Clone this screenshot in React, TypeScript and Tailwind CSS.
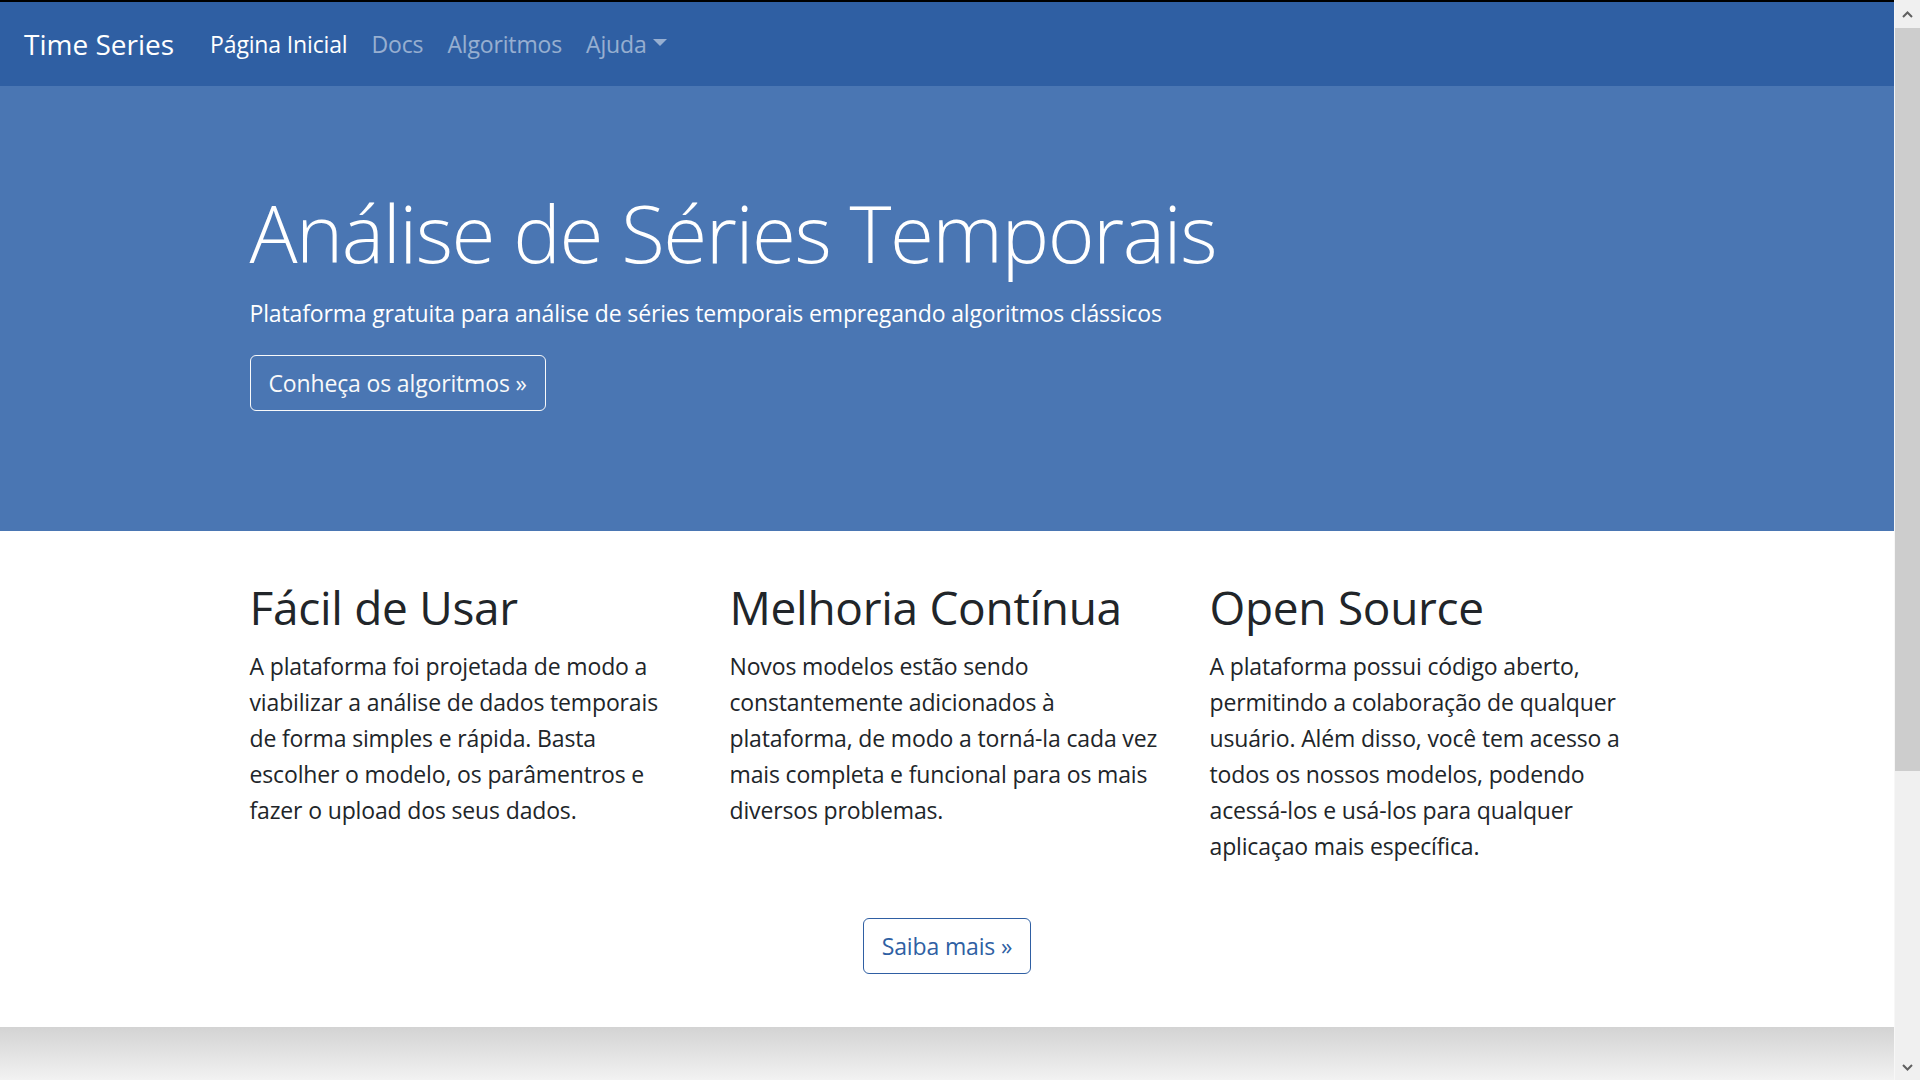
import React from "react";

const font = { fontFamily: '"Open Sans", "Noto Sans", sans-serif' };

function Col({ title, lines }: { title: string; lines: string[] }) {
  return (
    <div className="px-[22.5px]">
      <h2 className="text-[46px] leading-[57.6px] tracking-[-0.3px] font-normal text-[#212529] mb-[12px] whitespace-nowrap">{title}</h2>
      <p className="text-[23px] leading-[36px] tracking-[-0.15px] text-[#212529] mb-[24px]">
        {lines.map((l, i) => (
          <span key={i} className="block whitespace-nowrap">{l}</span>
        ))}
      </p>
    </div>
  );
}

export default function App() {
  return (
    <div className="flex h-screen w-full overflow-hidden bg-white" style={font}>
      <div className="flex-1 min-w-0 flex flex-col">
        <div className="h-[2px] bg-black shrink-0" />
        <nav className="h-[84px] shrink-0 bg-[#2f5fa3] flex items-center px-[24px]">
          <span className="text-[28px] text-white mr-[24px] leading-[45px]">Time Series</span>
          <ul className="flex items-center text-[23px] leading-[36px] tracking-[-0.15px]">
            <li className="px-[12px] text-white">Página Inicial</li>
            <li className="px-[12px] text-white/50">Docs</li>
            <li className="px-[12px] text-white/50">Algoritmos</li>
            <li className="px-[12px] text-white/50 flex items-center">
              Ajuda
              <span className="ml-[6px] mb-[4px] w-0 h-0 border-l-[7px] border-r-[7px] border-t-[7px] border-l-transparent border-r-transparent border-t-white/50" />
            </li>
          </ul>
        </nav>
        <section className="shrink-0 bg-[#4a76b3] pt-[96px] pb-[96px]">
          <div className="w-[1440px] mx-auto px-[22.5px]">
            <h1 className="text-[80px] leading-[100.8px] tracking-[-1.5px] font-light text-white mb-[12px] whitespace-nowrap">
              Análise de Séries Temporais
            </h1>
            <p className="text-[23px] leading-[36px] tracking-[-0.15px] text-white mb-[24px] whitespace-nowrap">
              Plataforma gratuita para análise de séries temporais empregando algoritmos clássicos
            </p>
            <p className="mb-[24px] h-[56px]">
              <button className="h-[56px] px-[18px] border border-[#f8f9fa] rounded-[6px] text-[23px] leading-[36px] tracking-[-0.15px] text-[#f8f9fa]">
                Conheça os algoritmos »
              </button>
            </p>
          </div>
        </section>
        <section className="shrink-0 pt-[48px]">
          <div className="w-[1440px] mx-auto grid grid-cols-3">
            <Col
              title="Fácil de Usar"
              lines={[
                "A plataforma foi projetada de modo a",
                "viabilizar a análise de dados temporais",
                "de forma simples e rápida. Basta",
                "escolher o modelo, os parâmentros e",
                "fazer o upload dos seus dados.",
              ]}
            />
            <Col
              title="Melhoria Contínua"
              lines={[
                "Novos modelos estão sendo",
                "constantemente adicionados à",
                "plataforma, de modo a torná-la cada vez",
                "mais completa e funcional para os mais",
                "diversos problemas.",
              ]}
            />
            <Col
              title="Open Source"
              lines={[
                "A plataforma possui código aberto,",
                "permitindo a colaboração de qualquer",
                "usuário. Além disso, você tem acesso a",
                "todos os nossos modelos, podendo",
                "acessá-los e usá-los para qualquer",
                "aplicaçao mais específica.",
              ]}
            />
          </div>
          <div className="flex justify-center mt-[30px]">
            <button className="h-[56px] px-[18px] border border-[#2f5fa3] rounded-[6px] text-[23px] leading-[36px] tracking-[-0.15px] text-[#2f5fa3]">
              Saiba mais »
            </button>
          </div>
        </section>
        <div className="flex-1" />
        <div className="h-[53px] shrink-0 bg-gradient-to-b from-[#d3d3d3] to-[#f2f2f2]" />
      </div>
      <div className="w-[26px] shrink-0 bg-[#f0f0f0] border-l border-[#f7f7f7] flex flex-col">
        <div className="h-[28px] flex items-center justify-center">
          <svg width="11" height="7" viewBox="0 0 11 7"><path d="M1 6 L5.5 1.5 L10 6" stroke="#606060" strokeWidth="2" fill="none" /></svg>
        </div>
        <div className="h-[743px] bg-[#cdcdcd]" />
        <div className="flex-1" />
        <div className="h-[26px] flex items-center justify-center">
          <svg width="11" height="7" viewBox="0 0 11 7"><path d="M1 1 L5.5 5.5 L10 1" stroke="#606060" strokeWidth="2" fill="none" /></svg>
        </div>
      </div>
    </div>
  );
}
